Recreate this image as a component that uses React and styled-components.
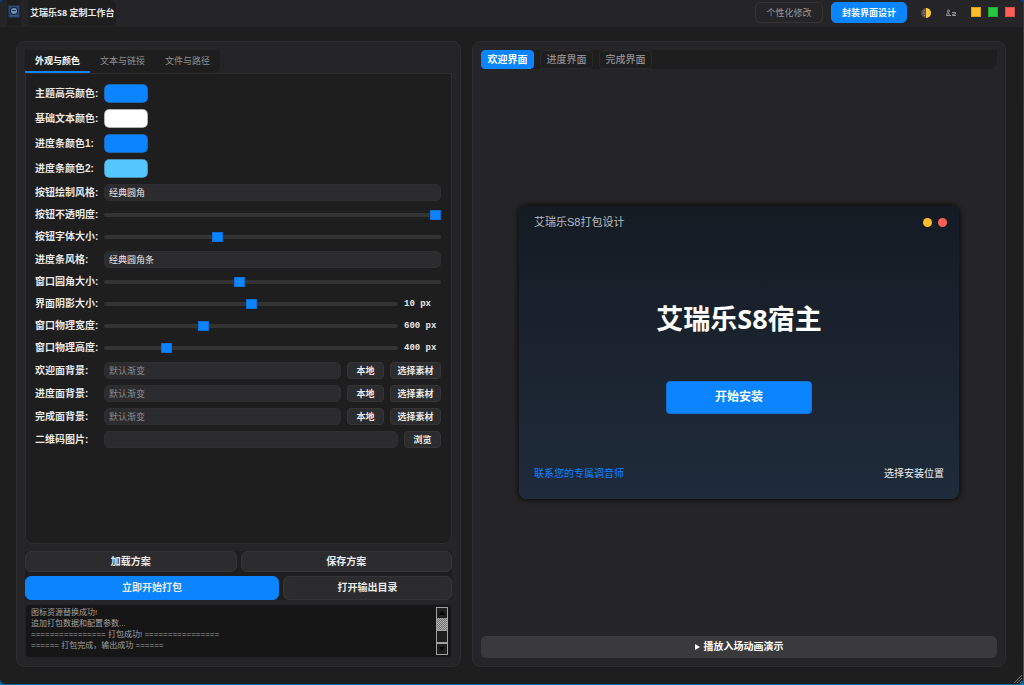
import React, { useState } from "react";
import styled, { createGlobalStyle, css } from "styled-components";

const Global = createGlobalStyle`
  *, *::before, *::after { box-sizing: border-box; }
  html, body { margin: 0; padding: 0; }
  body {
    background: linear-gradient(180deg, #0c3f80 0%, #0a5590 60%, #04679c 100%);
    color: #e8e8e8;
    font: 10px/14px "Liberation Sans", "Noto Sans CJK SC", sans-serif;
  }
  button, input, select { font: inherit; color: inherit; margin: 0; outline: none; }
  button { cursor: pointer; padding: 0; white-space: nowrap; }
`;

const Window = styled.div`
  position: relative;
  display: flex;
  flex-direction: column;
  min-height: calc(100vh - 1px);
  margin: 0 1px 1px 0;
  background: #1e1e1e;
  border-radius: 5px;
  overflow: hidden;
`;

const TitleBar = styled.header`
  display: flex;
  align-items: flex-start;
  height: 27px;
  padding: 0 8px 0 7px;
  background: #252527;
`;

const AppIcon = styled.div`
  width: 14px;
  height: 26px;
  padding-top: 5px;
  background: #1e1e1e;
  svg { display: block; }
`;

const AppTitle = styled.h1`
  margin: 0 auto 0 7px;
  padding: 0 2px;
  height: 26px;
  line-height: 26px;
  font-size: 9px;
  font-weight: 700;
  font-family: "Open Sans", "Noto Sans CJK SC", sans-serif;
  background: #1e1e1e;
  border-radius: 0 6px 0 0;
  white-space: nowrap;
`;

const ModeNav = styled.nav`
  display: flex;
  gap: 8px;
  padding-top: 2px;
`;

const ModeButton = styled.button`
  height: 21px;
  padding: 0 8px;
  min-width: ${(p) => (p.$active ? 76 : 68)}px;
  border-radius: 5px;
  border: 1px solid ${(p) => (p.$active ? "#0a84ff" : "#343436")};
  background: ${(p) => (p.$active ? "#0a84ff" : "#252527")};
  color: ${(p) => (p.$active ? "#fff" : "#98989d")};
  font-size: 9px;
  font-weight: ${(p) => (p.$active ? 700 : 400)};
`;

const IconTools = styled.div`
  display: flex;
  gap: 13px;
  padding: 7px 14px 0 13px;
`;

const IconButton = styled.button`
  display: flex;
  align-items: center;
  justify-content: center;
  width: 12px;
  height: 12px;
  border: 0;
  background: none;
`;

const WindowControls = styled.div`
  display: flex;
  gap: 7px;
  padding-top: 7px;
`;

const WindowButton = styled.button`
  width: 10px;
  height: 10px;
  border: 1px solid rgba(0, 0, 0, 0.15);
  background: ${(p) => p.$color};
`;

const Workspace = styled.main`
  flex: 1;
  display: grid;
  grid-template-columns: minmax(0, 5fr) minmax(0, 6fr);
  gap: 11px;
  padding: 14px 17px 17px 16px;
`;

const Panel = styled.section`
  display: flex;
  flex-direction: column;
  padding: 8px;
  border: 1px solid #2d2d2f;
  border-radius: 8px;
  background: #252527;
`;

const SettingTabs = styled.div`
  display: flex;
  align-self: flex-start;
  background: #1e1e1e;
  border-radius: 0 0 6px 6px;
`;

const SettingTab = styled.button`
  width: 65px;
  height: 23px;
  border: 0;
  border-bottom: 2px solid ${(p) => (p.$active ? "#0a84ff" : "transparent")};
  background: none;
  color: ${(p) => (p.$active ? "#fff" : "#8e8e93")};
  font-size: 9px;
  font-weight: ${(p) => (p.$active ? 700 : 400)};
`;

const Form = styled.form`
  flex: 1;
  display: flex;
  flex-direction: column;
  gap: 6px;
  padding: 10px 10px 9px 9px;
  border: 1px solid #2d2d2f;
  border-radius: 0 0 8px 8px;
  background: #1e1e1e;
`;

const heights = { swatch: 19, field: 17, slider: 16 };

const Row = styled.div`
  display: flex;
  align-items: center;
  gap: 6px;
  height: ${(p) => heights[p.$kind]}px;
`;

const Label = styled.label`
  flex: none;
  width: 63px;
  font-weight: 700;
  white-space: nowrap;
`;

const Swatch = styled.input`
  appearance: none;
  width: 44px;
  height: 19px;
  padding: 0;
  border: 0;
  border-radius: 5px;
  background: none;
  overflow: hidden;
  &::-webkit-color-swatch-wrapper { padding: 0; }
  &::-webkit-color-swatch { border: 1px solid rgba(60, 60, 62, 0.4); border-radius: 5px; }
`;

const fieldLook = css`
  flex: 1;
  min-width: 0;
  height: 17px;
  padding: 0 4px;
  border: 1px solid #2f2f31;
  border-radius: 5px;
  background: #2c2c2e;
  font-size: 9px;
`;

const Select = styled.select`
  appearance: none;
  ${fieldLook}
`;

const TextField = styled.input`
  ${fieldLook}
  &::placeholder { color: #8a8a8d; opacity: 1; }
`;

const Slider = styled.input`
  appearance: none;
  flex: 1;
  min-width: 0;
  height: 16px;
  background: none;
  &::-webkit-slider-runnable-track {
    height: 4px;
    border-radius: 2px;
    background: #333333;
  }
  &::-webkit-slider-thumb {
    appearance: none;
    width: 11px;
    height: 10px;
    margin-top: -3px;
    border: 1px solid #0a6fd6;
    background: #0a84ff;
  }
`;

const Value = styled.output`
  width: 37px;
  font: 700 9px/14px "Liberation Mono", monospace;
  white-space: pre;
`;

const SmallButton = styled.button`
  flex: none;
  width: ${(p) => (p.$wide ? 51 : 37)}px;
  height: 17px;
  border: 1px solid #353537;
  border-radius: 4px;
  background: #2c2c2e;
  font-size: 9px;
  font-weight: 700;
`;

const Actions = styled.div`
  display: flex;
  flex-direction: column;
  gap: 4px;
  margin-top: 7px;
  background: #1e1e1e;
`;

const ActionRow = styled.div`
  display: grid;
  grid-template-columns: ${(p) => (p.$main ? "3fr 2fr" : "1fr 1fr")};
  gap: 4px;
`;

const ActionButton = styled.button`
  height: ${(p) => (p.$tall ? 24 : 21)}px;
  border: 1px solid ${(p) => (p.$primary ? "#0a84ff" : "#353537")};
  border-radius: 6px;
  background: ${(p) => (p.$primary ? "#0a84ff" : "#2c2c2e")};
  font-weight: 700;
`;

const LogBox = styled.div`
  display: flex;
  justify-content: space-between;
  height: 54px;
  margin-top: 4px;
  padding: 2px 3px 2px 5px;
  border: 1px solid #222223;
  border-radius: 4px;
  background: #161616;
`;

const LogText = styled.div`
  color: #a0a0a0;
  font-size: 8px;
  line-height: 11px;
  white-space: pre;
`;

const ScrollBar = styled.div`
  display: flex;
  flex-direction: column;
  width: 12px;
  height: 48px;
  border: 1px solid #a0a0a0;
`;

const ScrollButton = styled.button`
  display: flex;
  align-items: center;
  justify-content: center;
  height: 10px;
  border: 0;
  background: #1e1e1e;
`;

const ScrollThumb = styled.div`
  height: 12px;
  background: repeating-conic-gradient(#b4b4b4 0 25%, #6a6a6a 0 50%) 0 0 / 2px 2px;
`;

const ScrollGap = styled.div`
  flex: 1;
  border: solid #a0a0a0;
  border-width: 1px 0 2px;
  background: #1e1e1e;
`;

const PageTabs = styled.div`
  display: flex;
  gap: 6px;
  background: #1e1e1e;
  border-radius: 4px 0 8px 4px;
`;

const PageTab = styled.button`
  width: 53px;
  height: 19px;
  border: 1px solid ${(p) => (p.$active ? "#0a84ff" : "#29292b")};
  border-radius: 4px;
  background: ${(p) => (p.$active ? "#0a84ff" : "#1e1e1e")};
  color: ${(p) => (p.$active ? "#fff" : "#8e8e93")};
  font-weight: ${(p) => (p.$active ? 700 : 500)};
`;

const Stage = styled.div`
  flex: 1;
  display: flex;
  align-items: center;
  justify-content: center;
`;

const Installer = styled.article`
  display: flex;
  flex-direction: column;
  width: 440px;
  max-width: 100%;
  aspect-ratio: 3 / 2;
  border-radius: 8px;
  background: linear-gradient(180deg, #151b23 0%, #1a222e 45%, #1f2b3b 100%);
  box-shadow: 0 0 5px 2px rgba(0, 0, 0, 0.55);
`;

const InstallerHeader = styled.div`
  display: flex;
  align-items: center;
  justify-content: space-between;
  height: 33px;
  padding: 0 12px 0 15px;
  color: #b9bcc0;
  font-size: 11px;
`;

const Dots = styled.div`
  display: flex;
  gap: 6px;
`;

const Dot = styled.button`
  width: 9px;
  height: 9px;
  border: 0;
  border-radius: 50%;
  background: ${(p) => p.$color};
`;

const InstallerBody = styled.div`
  flex: 1;
  display: flex;
  flex-direction: column;
  align-items: center;
  gap: 43px;
  padding-top: 61px;
`;

const InstallerName = styled.h2`
  margin: 0;
  color: #fff;
  font: 700 27px/38px "Open Sans", "Noto Sans CJK SC", sans-serif;
`;

const InstallButton = styled.button`
  width: 146px;
  height: 33px;
  border: 1px solid #1272d6;
  border-radius: 4px;
  background: #0a84ff;
  color: #fff;
  font-size: 12px;
  font-weight: 700;
`;

const InstallerFooter = styled.div`
  display: flex;
  align-items: center;
  justify-content: space-between;
  height: 50px;
  padding: 0 15px;
`;

const FooterLink = styled.a`
  color: ${(p) => (p.$accent ? "#0a84ff" : "#f0f0f0")};
  text-decoration: none;
`;

const PlayButton = styled.button`
  display: flex;
  align-items: center;
  justify-content: center;
  gap: 4px;
  height: 22px;
  border: 0;
  border-radius: 5px;
  background: #3a3a3c;
  color: #fff;
  font-weight: 700;
`;

const SizeGrip = styled.svg`
  position: absolute;
  right: 1px;
  bottom: 1px;
`;

const colors = [
  ["主题高亮颜色:", "#0a84ff"],
  ["基础文本颜色:", "#ffffff"],
  ["进度条颜色1:", "#0a84ff"],
  ["进度条颜色2:", "#54c7ff"],
];

const backgrounds = ["欢迎面背景:", "进度面背景:", "完成面背景:"];

function ColorRow({ id, label, value }) {
  return (
    <Row $kind="swatch">
      <Label htmlFor={id}>{label}</Label>
      <Swatch id={id} type="color" defaultValue={value} />
    </Row>
  );
}

function SelectRow({ id, label, option }) {
  return (
    <Row $kind="field">
      <Label htmlFor={id}>{label}</Label>
      <Select id={id}>
        <option>{option}</option>
      </Select>
    </Row>
  );
}

function SliderRow({ id, label, value, min = 0, max = 100, unit }) {
  const [current, setCurrent] = useState(value);
  return (
    <Row $kind="slider">
      <Label htmlFor={id}>{label}</Label>
      <Slider
        id={id}
        type="range"
        min={min}
        max={max}
        value={current}
        onChange={(e) => setCurrent(Number(e.target.value))}
      />
      {unit && <Value htmlFor={id}>{`${current} ${unit}`}</Value>}
    </Row>
  );
}

function Settings() {
  const [tab, setTab] = useState(0);
  return (
    <Panel>
      <SettingTabs role="tablist">
        {["外观与颜色", "文本与链接", "文件与路径"].map((name, i) => (
          <SettingTab key={name} role="tab" aria-selected={tab === i} $active={tab === i} onClick={() => setTab(i)}>
            {name}
          </SettingTab>
        ))}
      </SettingTabs>
      <Form onSubmit={(e) => e.preventDefault()}>
        {colors.map(([label, value], i) => (
          <ColorRow key={label} id={`color-${i}`} label={label} value={value} />
        ))}
        <SelectRow id="button-style" label="按钮绘制风格:" option="经典圆角" />
        <SliderRow id="button-opacity" label="按钮不透明度:" value={100} />
        <SliderRow id="button-font" label="按钮字体大小:" value={33} />
        <SelectRow id="progress-style" label="进度条风格:" option="经典圆角条" />
        <SliderRow id="window-radius" label="窗口圆角大小:" value={40} />
        <SliderRow id="shadow" label="界面阴影大小:" value={10} max={20} unit="px" />
        <SliderRow id="width" label="窗口物理宽度:" value={600} min={400} max={1000} unit="px" />
        <SliderRow id="height" label="窗口物理高度:" value={400} min={300} max={800} unit="px" />
        {backgrounds.map((label, i) => (
          <Row key={label} $kind="field">
            <Label htmlFor={`background-${i}`}>{label}</Label>
            <TextField id={`background-${i}`} type="text" placeholder="默认渐变" />
            <SmallButton type="button">本地</SmallButton>
            <SmallButton type="button" $wide>选择素材</SmallButton>
          </Row>
        ))}
        <Row $kind="field">
          <Label htmlFor="qr-image">二维码图片:</Label>
          <TextField id="qr-image" type="text" />
          <SmallButton type="button">浏览</SmallButton>
        </Row>
      </Form>
      <Actions>
        <ActionRow>
          <ActionButton>加载方案</ActionButton>
          <ActionButton>保存方案</ActionButton>
        </ActionRow>
        <ActionRow $main>
          <ActionButton $primary $tall>立即开始打包</ActionButton>
          <ActionButton $tall>打开输出目录</ActionButton>
        </ActionRow>
      </Actions>
      <LogBox>
        <LogText role="log">
          <div>图标资源替换成功!</div>
          <div>追加打包数据和配置参数...</div>
          <div>================ 打包成功! ================</div>
          <div>====== 打包完成，输出成功 ======</div>
        </LogText>
        <ScrollBar>
          <ScrollButton aria-label="向上滚动">
            <svg width="6" height="4" viewBox="0 0 6 4"><path d="M0 4L3 0L6 4Z" fill="#000" /></svg>
          </ScrollButton>
          <ScrollThumb />
          <ScrollGap />
          <ScrollButton aria-label="向下滚动">
            <svg width="6" height="4" viewBox="0 0 6 4"><path d="M0 0L3 4L6 0Z" fill="#000" /></svg>
          </ScrollButton>
        </ScrollBar>
      </LogBox>
    </Panel>
  );
}

function Preview() {
  const [page, setPage] = useState(0);
  return (
    <Panel>
      <PageTabs role="tablist">
        {["欢迎界面", "进度界面", "完成界面"].map((name, i) => (
          <PageTab key={name} role="tab" aria-selected={page === i} $active={page === i} onClick={() => setPage(i)}>
            {name}
          </PageTab>
        ))}
      </PageTabs>
      <Stage>
        <Installer>
          <InstallerHeader>
            <span>艾瑞乐S8打包设计</span>
            <Dots>
              <Dot $color="#ffbd2e" aria-label="最小化" />
              <Dot $color="#ff5f56" aria-label="关闭" />
            </Dots>
          </InstallerHeader>
          <InstallerBody>
            <InstallerName>艾瑞乐S8宿主</InstallerName>
            <InstallButton>开始安装</InstallButton>
          </InstallerBody>
          <InstallerFooter>
            <FooterLink href="#contact" $accent>联系您的专属调音师</FooterLink>
            <FooterLink href="#location">选择安装位置</FooterLink>
          </InstallerFooter>
        </Installer>
      </Stage>
      <PlayButton>
        <svg width="5" height="6" viewBox="0 0 5 6" aria-hidden="true"><path d="M0 0L5 3L0 6Z" fill="#fff" /></svg>
        播放入场动画演示
      </PlayButton>
    </Panel>
  );
}

export default function App() {
  return (
    <>
      <Global />
      <Window>
        <TitleBar>
          <AppIcon>
            <svg width="14" height="14" viewBox="0 0 14 14">
              <rect x="1" y="0" width="12" height="13" rx="1" fill="#1d3352" />
              <rect x="2" y="1" width="10" height="11" fill="#2c4a70" />
              <circle cx="7" cy="6" r="4" fill="#14233b" />
              <circle cx="7" cy="6" r="3" fill="#7592b4" />
              <path d="M5 5h4v1H5z" fill="#24405f" />
              <path d="M4 10q3 1 6 0v1H4z" fill="#4a6a92" />
            </svg>
          </AppIcon>
          <AppTitle>艾瑞乐S8 定制工作台</AppTitle>
          <ModeNav>
            <ModeButton>个性化修改</ModeButton>
            <ModeButton $active>封装界面设计</ModeButton>
          </ModeNav>
          <IconTools>
            <IconButton aria-label="切换主题">
              <svg width="12" height="12" viewBox="0 0 12 12">
                <circle cx="6" cy="6" r="5" fill="#55524a" />
                <path d="M6 1A5 5 0 0 1 6 11Z" fill="#ffc83d" />
                <path d="M4 3L5 4M3 6H5M4 9L5 8" stroke="#92928e" />
              </svg>
            </IconButton>
            <IconButton aria-label="账户">
              <svg width="12" height="12" viewBox="0 0 12 12" fill="none" stroke="#98989d">
                <circle cx="3.5" cy="4" r="1" />
                <path d="M2.5 5.5L1.5 8.5H4.5L3.5 5.5M4.5 8.5H6" />
                <path d="M7 5.5H10.5V7L7.5 7.5V8.5H11" />
              </svg>
            </IconButton>
          </IconTools>
          <WindowControls>
            <WindowButton $color="#ffbd2e" aria-label="最小化" />
            <WindowButton $color="#28c940" aria-label="最大化" />
            <WindowButton $color="#ff5f56" aria-label="关闭" />
          </WindowControls>
        </TitleBar>
        <Workspace>
          <Settings />
          <Preview />
        </Workspace>
        <SizeGrip width="9" height="9" viewBox="0 0 9 9" stroke="#77777a" fill="none">
          <path d="M1 9L9 1M4 9L9 4M7 9L9 7" />
        </SizeGrip>
      </Window>
    </>
  );
}
